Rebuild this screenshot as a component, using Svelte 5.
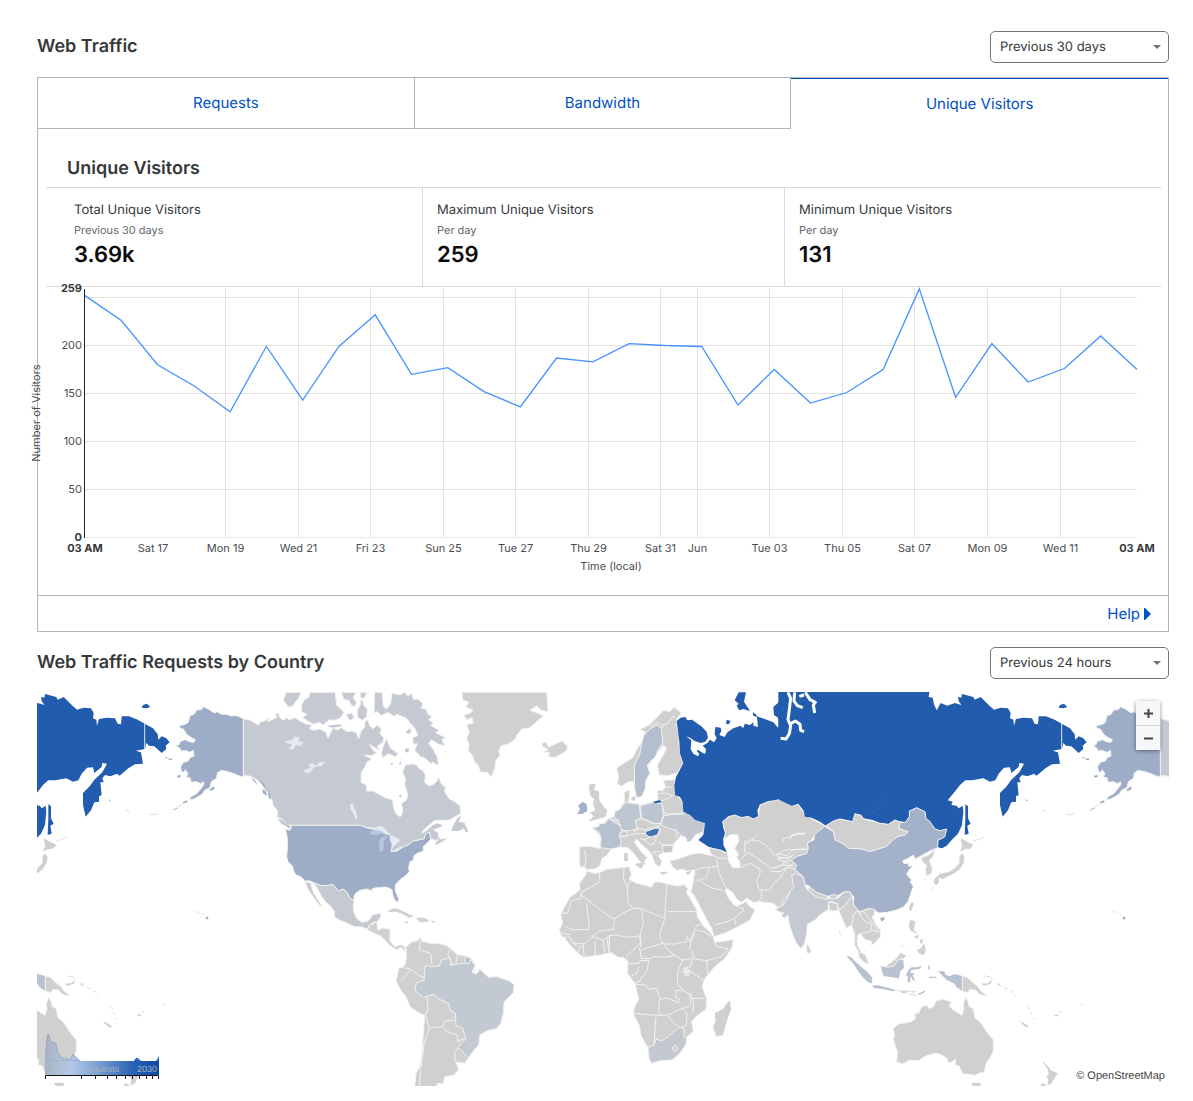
<script>
  const visitors = [252, 226, 180, 158, 131, 199, 143, 199, 232, 170, 177, 152, 136, 187, 183, 202, 200, 199, 138, 175, 140, 151, 175, 259, 146, 202, 162, 176, 210, 175];
  const yFor = (v) => 537.5 - v * 0.96;
  const line = visitors.map((v, i) => `${(85 + (i * 1052) / 29).toFixed(1)},${yFor(v).toFixed(1)}`).join(' ');
  const yTicks = [50, 100, 150, 200, 250];
  const xTicks = [
    [225.5, 'Mon 19'], [298.5, 'Wed 21'], [370.5, 'Fri 23'], [443.5, 'Sun 25'], [515.5, 'Tue 27'],
    [588.5, 'Thu 29'], [660.5, 'Sat 31'], [697.5, 'Jun'], [769.5, 'Tue 03'], [842.5, 'Thu 05'],
    [914.5, 'Sat 07'], [987.5, 'Mon 09'], [1060.5, 'Wed 11']
  ];

  const stats = [
    { title: 'Total Unique Visitors', note: 'Previous 30 days', value: '3.69k' },
    { title: 'Maximum Unique Visitors', note: 'Per day', value: '259' },
    { title: 'Minimum Unique Visitors', note: 'Per day', value: '131' }
  ];

  let tab = $state('Unique Visitors');
  const tabs = ['Requests', 'Bandwidth', 'Unique Visitors'];

  // Each region has its own origin; points are in thirds of a map unit. [class, outline]
  const regions = [
    { x: 30, y: 685, shapes: [
      ['us', 'M641,101 620,92 604,93 590,88 575,88 560,80 553,84 535,72 520,65 514,74 500,75 492,88 480,92 475,112 466,118 448,122 450,130 460,132 470,148 484,158 496,164 492,172 478,170 466,164 450,170 448,178 438,182 450,190 453,198 468,197 480,202 490,196 492,213 480,218 475,228 460,232 452,245 454,260 462,262 466,254 474,266 468,276 480,278 484,292 500,290 512,296 520,290 522,298 512,312 500,326 482,336 478,344 492,342 516,328 524,316 540,308 544,290 560,280 562,264 574,256 584,258 600,262 612,266 625,272 641,276Z'],
      ['us tiny', 'M458,352 470,346 474,350 460,356Z M538,314 552,304 554,312 542,318Z M440,272 452,270 452,276 444,278Z M406,216 414,219 406,220Z M414,222 426,220 426,225 418,225Z M236,342 242,346 238,350Z M428,374 440,368 444,370 430,376Z M526,698 532,694 536,700 530,704Z'],
      ['speck', 'M358,388 370,389 382,386 M286,374 298,380 M498,680 508,682 M514,684 524,690 M440,368 456,358']
    ]},
    { x: 240, y: 685, shapes: [
      ['ca', 'M10,101 30,105 55,121 60,112 75,107 90,96 82,110 100,102 113,96 104,90 114,84 120,98 132,106 140,98 148,104 165,98 180,108 200,118 214,118 210,132 222,136 240,132 258,142 264,160 270,146 280,128 292,136 304,128 320,140 338,138 350,144 356,162 362,140 374,126 374,112 384,104 388,120 398,132 412,120 424,132 420,148 432,158 430,170 412,184 420,196 404,188 388,178 400,196 410,204 394,212 372,210 396,222 380,232 374,248 364,260 363,292 380,300 380,318 400,318 420,330 440,340 458,344 460,366 466,384 480,396 486,388 488,372 484,356 500,344 503,330 498,312 494,300 496,280 488,262 496,240 515,237 530,240 538,252 548,256 556,270 554,292 566,302 578,300 590,290 596,276 604,296 616,308 614,320 628,342 644,350 660,362 662,386 646,394 630,405 584,406 568,420 550,436 545,445 560,436 578,420 592,414 608,420 600,428 580,434 596,444 594,452 600,462 622,460 612,468 590,480 584,476 596,464 584,466 572,460 568,442 552,462 520,468 508,478 490,486 470,500 454,502 456,488 478,466 456,455 440,440 410,430 380,428 362,421 152,421 140,418 126,402 112,396 112,376 100,362 96,346 88,330 72,312 66,298 50,284 30,273 10,272Z'],
      ['ca', 'M185,60 194,42 206,38 210,22 286,22 290,60 302,72 312,82 300,100 284,106 268,104 250,120 238,112 222,118 206,110 188,98 200,88 184,80Z M130,46 138,22 184,22 176,40 164,54 158,64 145,66Z M304,22 348,22 340,38 350,52 344,66 334,60 326,46 312,44Z M352,74 362,58 360,44 370,50 370,60 382,72 380,96 366,106 352,96Z M318,88 336,84 342,98 330,108Z M360,22 380,22 374,38 362,40Z M404,22 426,22 430,64 440,72 452,56 456,24 480,30 494,22 504,34 514,24 522,44 534,42 548,56 544,70 558,72 564,88 576,96 566,104 580,114 572,122 584,128 596,134 588,144 600,150 618,158 606,164 614,182 596,178 574,164 566,176 582,196 586,206 592,216 596,242 580,232 572,236 556,220 540,214 534,206 524,196 532,176 520,178 518,160 534,150 524,130 510,114 500,100 486,94 470,88 462,94 444,82 424,92 412,80 402,84Z M430,182 440,160 444,172 452,190 474,206 466,216 446,206 428,218 424,204Z'],
      ['ca tiny', 'M494,192 506,188 506,202 496,202Z M498,140 510,130 514,140 504,148Z M450,236 460,232 456,240Z M476,238 484,226 482,240Z M634,438 640,420 652,400 664,392 656,410 674,414 678,426 686,442 676,440 672,430 656,438Z M112,400 128,406 150,422 154,436 138,424 124,416Z M260,122 300,118 306,124 276,128Z M476,332 486,328 482,338Z'],
      ['us', 'M152,421 362,421 378,428 400,432 425,440 450,450 458,475 453,500 470,498 490,486 508,478 520,468 552,462 557,446 568,442 572,463 562,474 550,484 550,498 534,504 522,512 520,526 510,530 506,548 508,560 494,574 478,586 466,600 466,618 476,640 474,652 466,648 458,630 456,614 444,608 432,606 420,608 408,608 396,612 398,618 380,612 360,616 348,624 342,634 342,648 330,640 322,624 310,612 296,618 278,598 262,602 242,602 210,588 194,588 184,576 168,570 160,556 158,544 144,530 140,514 142,492 142,458 136,432 150,436 154,428Z'],
      ['us tiny', 'M34,278 44,284 52,300 44,292Z M56,284 70,294 78,310 70,304Z M66,312 76,318 82,332 70,326Z M84,322 90,326 94,344 86,338Z'],
      ['mx', 'M212,590 242,602 262,602 278,598 296,618 310,612 322,624 330,640 342,648 340,664 342,682 350,700 366,712 384,708 392,700 396,690 424,684 420,700 412,710 400,712 388,720 382,732 364,726 340,724 316,712 296,704 282,694 284,680 272,664 256,650 242,630 230,606 224,598Z M194,590 212,594 218,618 230,640 250,668 240,662 224,642 206,616Z'],
      ['lake', 'M132,172 160,162 164,154 180,158 174,168 190,172 182,184 168,180 160,194 146,192 156,178Z M190,256 212,248 206,238 218,234 226,242 240,230 256,230 246,242 224,246 208,264 194,262Z M330,358 338,354 342,370 350,384 352,406 344,400 340,384 332,374Z M400,432 416,422 432,426 444,444 440,450 424,440Z M448,456 462,454 480,466 470,474 458,486 452,470Z M456,497 484,484 490,486 470,500Z'],
      ['lakeus', 'M386,446 400,434 424,438 440,450 424,446 410,450Z M416,470 426,456 446,452 432,466 430,498 418,500 Z'],
      ['gl', 'M666,22 920,22 924,80 904,76 890,62 870,76 892,84 910,92 888,112 870,128 846,132 832,148 824,164 802,178 784,182 776,198 780,212 768,226 764,250 754,276 742,262 722,262 714,240 704,232 698,212 684,196 688,178 680,160 688,140 680,120 700,114 696,98 680,104 672,90 690,84 700,76 678,66 686,52 668,44Z']
    ]},
    { x: 370, y: 900, shapes: [
      ['gray', 'M-8,90 0,73 10,72 20,64 24,90 40,84 60,88 60,122 74,140 94,134 106,142 104,152 92,142 82,150 64,140 46,122 32,108 12,100Z'],
      ['gray tiny', 'M54,34 72,26 88,30 108,40 128,48 118,52 104,44 82,34Z M140,56 160,54 176,62 152,66Z M104,66 114,66 110,68Z M184,64 192,64 190,67Z'],
      ['gray', 'M108,142 124,126 142,122 152,112 156,124 168,126 180,130 204,130 228,136 244,148 262,164 286,168 302,172 316,196 306,216 330,208 356,232 380,230 404,238 420,244 432,254 430,278 416,292 402,306 400,340 392,370 380,386 352,392 330,404 326,434 306,458 294,476 284,490 258,486 266,510 250,526 224,530 220,552 202,550 200,562 134,562 138,520 150,500 156,460 160,400 164,346 142,336 120,320 108,290 92,270 78,242 86,206 104,196 110,170Z'],
      ['br', 'M166,196 184,200 208,198 214,180 240,174 242,196 262,192 284,190 302,180 316,196 306,216 330,208 356,232 380,230 404,238 420,244 432,254 430,278 416,292 402,306 400,340 392,370 380,386 352,392 330,404 326,434 306,458 296,474 264,442 288,416 276,382 258,378 256,340 240,330 236,310 204,296 192,283 160,292 136,272 138,250 162,240 164,216Z'],
      ['border', 'M150,122 148,150 182,160 186,196 M240,146 234,162 246,194 M262,164 258,190 M88,202 120,206 146,226 164,234 M122,208 108,226 92,244 M166,346 174,330 172,290 M166,346 178,384 162,430 158,470 152,510 148,562 M178,384 218,380 226,362 254,362 M218,380 232,396 262,406 262,424 286,416 M264,442 254,462 256,486'],
      ['fr', 'M286,190 286,168 302,176 296,190Z'],
      ['sea', 'M306,216 318,210 328,212 318,222Z']
    ]},
    { x: 540, y: 685, shapes: [
      ['gray', 'M8,172 20,172 24,186 40,180 66,168 82,182 80,196 66,206 44,218 24,214 30,204 10,200 24,194 6,184Z'],
      ['gray', 'M230,250 246,238 278,218 292,190 306,170 316,140 300,134 330,118 348,100 370,76 390,80 402,66 424,84 412,100 410,120 418,150 416,170 420,205 430,235 410,265 384,272 358,270 352,240 372,206 380,190 370,180 350,206 325,240 325,270 305,335 290,335 280,288 262,292 244,304 232,296 236,276Z'],
      ['se', 'M283,290 284,240 300,206 302,186 312,150 330,132 352,120 364,130 368,174 356,190 346,215 322,240 330,266 318,284 316,310 306,334 290,338 284,312Z'],
      ['border', 'M330,124 352,112 364,120 382,118 400,92 412,110 M364,130 372,120'],
      ['gray', 'M118,486 150,484 180,490 180,452 158,430 186,424 206,400 232,392 240,372 254,350 252,322 270,314 268,334 266,352 300,360 340,350 354,348 352,316 370,316 376,306 370,286 404,284 403,325 428,350 434,378 465,405 495,415 490,440 466,450 452,470 440,470 438,458 424,452 408,468 400,480 396,502 370,502 354,512 366,528 360,546 346,538 334,506 318,490 304,478 290,462 284,472 302,498 322,518 314,526 316,540 300,530 282,506 264,488 240,486 214,492 200,512 186,520 180,542 164,552 140,554 134,546 118,544Z'],
      ['gray tiny', 'M148,300 166,298 160,316 176,320 176,346 190,366 200,376 196,394 176,400 148,408 162,394 152,384 168,376 160,356 164,342 152,332Z M276,338 284,334 284,346 274,344Z M286,538 310,534 304,550Z M254,506 262,506 262,528 254,526Z M360,562 382,564 368,568Z M438,564 454,558 446,568Z'],
      ['fr', 'M156,430 176,424 178,416 194,416 206,400 222,412 246,424 244,440 236,450 244,470 240,486 214,492 180,488 184,460 176,440Z'],
      ['de', 'M222,400 224,380 238,374 246,364 258,352 298,358 302,398 286,408 292,432 262,438 244,434 236,406Z M240,442 262,440 258,454 244,452Z'],
      ['pl', 'M302,362 340,352 366,356 370,390 364,414 344,416 304,398Z'],
      ['ua', 'M372,392 440,382 465,405 495,415 490,440 466,450 452,470 440,470 438,458 424,452 408,436 388,430 362,420Z'],
      ['bg', 'M366,482 400,480 396,502 370,504Z'],
      ['hu', 'M316,440 344,430 360,430 352,450 330,456 318,450Z'],
      ['ie', 'M112,388 120,372 114,362 128,350 140,358 142,378 128,386Z'],
      ['border', 'M354,326 376,324 400,332 M354,346 372,346 400,332 M366,360 374,386 432,388 M284,408 304,400 340,416 364,416 M290,430 316,434 360,422 M240,456 262,452 282,446 316,446 M362,432 356,450 340,462 M356,470 366,480 400,480 M406,432 412,458 M330,456 312,466 300,460 M310,460 330,480 340,478 350,460 M350,512 340,500 362,500 M134,496 138,520 134,544 M374,306 400,306 M206,402 236,410 M280,440 300,430'],
      ['ru', 'M410,108 422,98 436,96 442,106 456,104 470,114 484,124 500,140 504,158 496,170 482,174 464,168 450,158 438,154 454,166 452,192 460,206 474,214 478,206 470,198 474,194 488,204 496,206 498,192 488,182 502,174 510,164 522,172 530,160 524,148 526,126 542,128 544,138 538,150 554,156 562,142 580,130 602,122 610,130 614,116 630,120 640,112 640,122 654,126 652,106 650,94 674,102 700,112 714,128 718,116 714,98 702,90 700,66 716,52 718,24 744,24 744,60 730,100 742,110 756,21 804,21 804,345 720,345 705,347 684,350 660,360 652,376 655,395 640,402 624,394 605,398 585,390 565,395 548,410 550,430 558,444 550,460 550,480 562,504 540,495 505,485 475,465 490,450 495,415 465,405 450,390 430,380 428,350 420,336 405,330 403,300 408,276 430,235 420,205 418,170 413,130Z M596,22 618,22 612,50 630,78 610,72 598,76 590,62 596,56 584,46Z M560,104 572,108 566,118 558,116Z M340,350 360,345 364,352 344,355Z M638,82 648,88 652,96 640,92Z'],
      ['gray', 'M548,410 565,395 585,390 605,398 624,394 640,402 655,395 660,360 684,350 705,347 720,343 730,345 740,355 758,360 775,358 795,390 820,404 855,422 850,440 825,452 805,475 804,500 800,560 790,620 770,680 735,690 720,672 700,655 660,650 640,652 620,640 605,652 590,642 578,622 560,610 556,618 566,640 580,658 590,662 608,656 620,648 625,660 645,675 630,705 600,722 560,742 522,755 515,730 498,700 480,665 464,634 452,620 458,600 465,555 440,558 428,552 412,556 396,544 390,528 420,520 452,508 478,504 516,512 505,488 540,495 562,504 566,530 578,548 600,548 600,532 590,515 596,510 584,490 596,470 594,450 572,448 552,464 556,444Z'],
      ['border', 'M615,505 614,468 626,470 654,450 M614,480 634,464 656,468 676,480 690,492 700,510 716,510 730,495 800,492 M604,520 626,502 650,520 680,540 690,550 M600,548 630,535 660,552 660,566 650,585 656,614 M655,615 690,615 702,594 720,580 736,552 760,536 M656,650 666,636 664,618 M516,510 540,520 560,520 M530,520 536,560 548,590 560,612 M465,556 480,550 532,544 M474,592 500,575 508,548 M484,592 520,610 548,616 M478,582 464,590 M690,550 714,545 730,540 760,542 M714,515 738,520 760,510 M525,720 560,710 584,700 612,675 M584,700 588,720 M585,662 612,672 M735,670 725,650 738,636 764,604 M540,495 560,505 M746,456 730,462 730,472 M716,524 745,535']
    ]},
    { x: 780, y: 685, shapes: [
      ['ru', 'M-5,21 448,21 446,36 458,38 462,58 470,76 482,54 502,62 524,54 544,60 536,48 534,36 544,38 546,27 580,36 584,44 602,36 614,48 630,64 642,74 662,68 684,70 692,84 690,100 700,104 702,122 708,102 730,98 756,100 764,116 774,118 776,94 798,94 824,104 845,116 870,130 884,148 886,164 896,154 910,160 920,172 908,182 910,192 896,204 874,184 858,182 850,174 846,192 818,197 834,202 840,236 816,238 796,250 770,272 762,266 742,274 726,270 718,280 722,292 712,292 716,330 708,334 708,350 694,352 684,376 668,395 660,360 660,324 680,304 694,284 718,262 732,236 718,234 716,246 694,264 690,247 672,248 656,266 646,286 630,290 610,280 576,286 556,286 540,300 526,318 503,346 518,350 514,360 530,362 536,370 548,362 550,380 546,420 534,446 515,465 500,482 486,490 473,487 474,466 492,456 500,432 480,437 465,432 450,410 438,400 435,380 410,368 388,378 388,395 376,412 355,408 345,405 325,418 300,415 278,405 250,400 244,390 225,386 218,410 180,402 160,410 138,422 120,410 95,398 75,395 70,376 55,356 35,362 10,350 -5,343Z M556,358 564,364 564,400 572,416 562,422 566,446 554,450 556,400Z M836,68 840,60 852,56 862,66 850,70 Z'],
      ['dateline', 'M845,116 845,192'],
      ['lakeru', 'M308,336 310,346 296,370 280,386 264,388 288,372 300,354Z'],
      ['gulf', 'M24,22 32,40 28,74 24,104 32,122 28,146 18,162 2,160 M32,116 46,108 60,118 62,136 72,140 M44,22 42,48 52,62 68,68 M58,34 72,30 M76,22 90,44 106,52 100,60 104,84'],
      ['gray', 'M138,422 160,408 180,402 218,410 225,386 244,392 250,402 278,408 300,415 325,418 345,405 362,412 356,430 384,440 376,450 355,454 340,464 320,484 296,492 270,500 246,492 206,490 186,474 165,465 160,440Z'],
      ['cn', 'M85,490 82,474 102,464 104,448 134,424 160,440 165,465 186,474 206,490 246,492 270,500 296,492 320,484 340,464 355,454 376,450 384,440 356,430 362,412 376,412 388,395 388,378 410,368 435,380 438,400 450,410 465,432 480,437 500,432 494,456 474,466 473,488 450,498 424,512 406,522 400,510 384,520 368,528 372,536 384,534 386,544 400,542 386,556 380,568 396,586 390,590 400,604 392,626 384,650 370,666 352,674 322,682 298,684 268,670 240,680 232,680 220,660 222,636 208,620 190,622 172,632 140,634 104,620 86,602 74,598 70,576 45,552 50,540 34,526 50,514 80,506Z'],
      ['in', 'M35,570 50,566 70,576 74,598 80,612 108,634 142,642 150,640 174,640 190,622 208,620 218,634 204,650 190,670 176,672 172,656 150,648 144,660 146,672 120,690 106,704 82,718 80,750 72,780 62,790 50,776 40,754 28,720 24,690 12,700 4,690 12,684 -4,680 -14,672 10,660 22,640 30,620 42,604 38,590Z'],
      ['gray', 'M80,612 92,608 110,622 142,634 142,644 108,636Z M146,650 160,654 172,656 174,676 160,678 148,676Z M147,632 164,628 172,634 168,642 150,641Z M80,782 84,778 94,800 86,806 80,802Z M216,634 222,660 240,682 268,670 286,674 282,690 276,696 290,722 300,734 302,754 286,772 274,782 274,768 256,764 240,746 232,752 232,780 242,800 258,812 266,838 252,832 238,818 234,796 224,782 224,746 214,720 200,730 192,714 184,694 176,676 190,666 204,648Z M424,518 446,510 466,492 460,512 448,528 458,552 452,568 438,572 436,554 440,542 428,530Z'],
      ['gray tiny', 'M544,462 558,470 578,480 570,490 552,492 542,498 548,484Z M546,506 552,516 550,532 540,550 528,560 506,572 488,576 466,580 480,568 508,562 524,552 540,534 540,516Z M464,582 476,582 474,594 468,600 462,590Z M484,574 498,576 486,582Z M396,652 400,656 392,678 388,668Z M392,706 404,710 400,736 410,744 392,736 388,722Z M412,796 424,790 432,778 436,796 432,808 420,806Z M404,754 416,752 410,760Z M420,766 428,764 424,776Z'],
      ['cn tiny', 'M300,700 312,696 314,702 306,710Z'],
      ['border', 'M218,690 234,676 246,700 260,712 272,714 276,736 296,740 M216,720 220,690 M256,744 276,736 M240,746 256,744 M250,680 262,694 280,716 294,738 M-10,520 30,518 40,510 M-10,505 20,512 40,494 80,492 M-20,550 6,540 20,526 34,526 M-30,560 0,560 20,546 44,552 M240,802 250,806'],
      ['cloud', 'M76,446 52,446 34,452 30,462'],
      ['speck', 'M580,468 600,462 612,456 M374,778 364,788 M178,740 182,752 M432,584 438,580 M460,606 456,616 M912,218 926,222']
    ]},
    { x: 540, y: 840, shapes: [
      ['gray', 'M142,92 160,100 176,98 200,88 236,84 268,80 274,104 268,118 286,128 310,134 334,142 344,126 362,126 380,132 412,138 434,134 446,150 438,154 454,182 470,210 472,230 490,258 510,276 520,290 524,306 550,304 580,298 576,322 556,354 520,384 495,415 486,440 500,475 498,508 470,528 455,545 460,575 440,592 438,612 420,640 396,660 360,662 336,670 328,660 326,626 304,590 298,556 280,522 284,500 296,478 286,432 262,400 264,364 250,352 235,352 215,338 180,345 130,352 108,334 90,315 76,296 62,284 58,268 68,250 62,222 80,190 92,170 120,150 118,130 136,106Z'],
      ['za', 'M342,616 348,598 366,602 385,590 400,576 420,562 432,566 432,590 440,596 438,612 420,640 396,660 360,662 336,670 328,660 324,622Z'],
      ['gray', 'M396,624 406,615 414,626 404,636Z'],
      ['gray tiny', 'M526,520 550,508 558,496 568,483 572,508 562,534 548,584 530,588 520,560 528,544Z'],
      ['border', 'M178,98 180,125 150,142 125,156 122,176 94,182 90,200 82,220 62,220 M122,164 215,235 224,236 244,222 280,205 265,190 262,140 250,115 252,85 M262,140 274,120 M140,190 148,268 96,270 75,258 M280,205 300,205 375,235 375,215 380,135 M382,215 470,215 M375,235 358,285 370,312 405,312 440,305 442,290 450,306 460,280 470,256 486,252 M305,208 310,250 300,285 304,310 298,330 M224,236 220,268 182,272 156,290 134,312 96,308 92,292 62,292 M156,290 190,300 212,286 230,285 262,292 298,288 302,308 280,330 258,350 M62,280 92,284 M302,330 340,318 370,310 384,330 404,346 M300,330 304,355 330,356 342,350 372,352 404,346 428,360 456,356 M265,372 298,370 300,362 326,362 322,392 306,412 298,424 285,428 M274,408 290,400 298,380 M286,433 318,435 326,448 350,444 360,478 380,474 416,488 418,476 406,472 408,452 428,452 M428,360 414,392 412,432 430,452 448,462 454,498 M358,478 356,515 365,525 M280,520 350,526 385,525 420,508 450,498 M348,530 342,616 M385,528 400,548 420,564 438,558 442,520 430,510 M456,330 460,356 500,362 545,350 565,326 530,320 524,306 M500,362 503,400 M424,396 450,394 490,420 M454,476 496,474 M464,278 452,310 448,330 M470,270 494,276 516,290 M130,315 132,350 M126,314 112,338 M165,305 166,345 M190,300 194,342 M202,296 206,338 M208,286 208,334 M100,310 116,320 M456,356 452,380 428,386 M452,460 462,490 458,520'],
      ['cloud2', 'M430,388 442,384 452,392 446,408 434,408Z']
    ]},
    { x: 780, y: 860, shapes: [
      ['id', 'M198,287 212,290 230,308 262,336 276,352 277,370 266,368 248,352 232,330 218,308Z M276,376 296,376 318,382 348,390 340,394 310,388 282,384Z M302,318 318,322 342,318 356,298 370,300 372,324 362,332 356,356 338,352 310,348Z M378,344 386,330 394,322 410,322 426,318 420,326 394,330 392,340 404,338 398,346 406,362 398,360 392,348 390,368 382,364 384,352Z M474,334 492,334 498,346 510,348 524,342 547,348 547,393 530,382 522,370 500,360 486,346Z'],
      ['gray', 'M318,318 332,308 350,294 360,278 380,286 370,296 356,298 342,318 322,322Z M547,348 562,352 576,366 592,378 604,394 622,408 600,404 586,390 570,388 562,398 547,393Z M340,505 356,492 392,486 406,476 404,462 416,458 426,440 440,436 448,446 460,440 470,422 490,418 514,426 508,438 520,450 546,466 552,446 550,430 557,412 564,424 568,440 580,446 584,472 602,488 620,515 640,540 640,572 632,590 620,606 612,636 596,640 584,646 566,642 548,642 536,616 526,616 526,596 516,606 506,608 500,594 484,584 468,580 440,586 416,602 390,600 368,612 350,606 352,576 338,534 344,530Z'],
      ['gray tiny', 'M574,670 602,670 598,680 582,680Z M790,606 806,624 814,634 832,640 822,654 814,670 804,674 806,656 800,650 808,642 804,626Z M784,680 786,670 798,676 796,684Z M722,486 734,492 746,500 738,500Z M824,466 832,464 832,468Z M606,372 624,372 634,362 632,370 614,376Z M654,370 660,374 656,376Z'],
      ['id tiny', 'M446,316 450,318 448,330 444,326Z M446,350 468,350 470,353 448,354Z M414,402 436,390 432,398 416,406Z M396,394 404,396 398,398Z M362,394 382,394 380,398 364,398Z'],
      ['speck', 'M350,392 410,394 M384,402 410,406 M612,348 630,350 638,358 M654,370 664,380 M672,382 684,388 M690,392 700,398 M702,404 708,410 M742,440 750,450 M752,456 754,464 M760,474 764,480 M836,456 844,454 M900,432 910,436']
    ]}
  ];
</script>

{#snippet world()}
  {#each regions as r}
    <g transform="translate({r.x} {r.y}) scale(0.33333)">
      {#each r.shapes as [kind, d]}
        <path class={kind} {d} />
      {/each}
    </g>
  {/each}
{/snippet}

{#snippet picker(id, label, option)}
  <div class="picker">
    <select {id} aria-label={label}>
      <option>{option}</option>
    </select>
    <svg class="caret" width="8" height="4" viewBox="0 0 8 4" aria-hidden="true"><path d="M0,0H8L4,4Z" /></svg>
  </div>
{/snippet}

<main>
  <header class="bar first">
    <h2>Web Traffic</h2>
    {@render picker('traffic-range', 'Web traffic period', 'Previous 30 days')}
  </header>

  <section class="panel">
    <div class="tabs" role="tablist">
      {#each tabs as t}
        <button role="tab" aria-selected={tab === t} class:active={tab === t} onclick={() => (tab = t)}>{t}</button>
      {/each}
    </div>

    <div class="body">
      <h3>Unique Visitors</h3>
      <div class="stats">
        {#each stats as s}
          <div class="stat">
            <div class="title">{s.title}</div>
            <div class="note">{s.note}</div>
            <div class="value">{s.value}</div>
          </div>
        {/each}
      </div>
      <svg class="chart" viewBox="38 287 1130 308" role="img" aria-label="Unique visitors per day">
        <g class="grid">
          {#each yTicks as v}
            <path d="M85,{yFor(v)}H1137" />
          {/each}
          {#each xTicks as [x]}
            <path d="M{x},289V537" />
          {/each}
          <path class="base" d="M85,537.5H1137" />
        </g>
        <path class="axis" d="M84.5,289V538" />
        <polyline class="series" points={line} />
        <g class="ylabels">
          <text class="strong" x="82" y="292">259</text>
          <text x="82" y="349">200</text>
          <text x="82" y="397">150</text>
          <text x="82" y="445">100</text>
          <text x="82" y="493">50</text>
          <text class="strong" x="82" y="541">0</text>
        </g>
        <g class="xlabels">
          <text class="strong" x="85" y="552">03 AM</text>
          <text x="153" y="552">Sat 17</text>
          {#each xTicks as [x, label]}
            <text {x} y="552">{label}</text>
          {/each}
          <text class="strong" x="1137" y="552">03 AM</text>
          <text x="611" y="570">Time (local)</text>
          <text transform="translate(40 413) rotate(-90)">Number of Visitors</text>
        </g>
      </svg>
    </div>

    <footer>
      <a href="#help">Help
        <svg width="7" height="12" viewBox="0 0 7 12" aria-hidden="true"><path d="M0,0L1,0 7,6 1,12 0,12Z" /></svg>
      </a>
    </footer>
  </section>

  <header class="bar second">
    <h2>Web Traffic Requests by Country</h2>
    {@render picker('country-range', 'Requests by country period', 'Previous 24 hours')}
  </header>

  <section class="map">
    <svg class="land" viewBox="37 692 1132 394" role="img" aria-label="Requests by country">
      {@render world()}
      <g transform="translate(917 0)">{@render world()}</g>
      <g transform="translate(-917 0)">{@render world()}</g>
    </svg>

    <div class="zoom">
      <button aria-label="Zoom in"><svg width="9" height="9" viewBox="0 0 9 9"><path d="M0,4.5H9M4.5,0V9" /></svg></button>
      <button aria-label="Zoom out"><svg width="9" height="9" viewBox="0 0 9 9"><path d="M0,4.5H9" /></svg></button>
    </div>

    <svg class="legend" width="116" height="56" viewBox="44 1024 116 56" role="img" aria-label="0 to 2030 requests">
      <defs>
        <linearGradient id="scale" gradientUnits="userSpaceOnUse" x1="45" y1="0" x2="159" y2="0">
          <stop offset="0" stop-color="#a9b4c3" />
          <stop offset="0.22" stop-color="#b3c8e8" />
          <stop offset="0.4" stop-color="#8cabd9" />
          <stop offset="0.75" stop-color="#2e65b4" />
          <stop offset="1" stop-color="#0a48a4" />
        </linearGradient>
      </defs>
      <path fill="url(#scale)" stroke="#8d9cb4" stroke-opacity="0.7" d="M45.5,1061 46,1050 47,1038 48,1034 49,1035 51,1042 52,1043 54,1042 56,1044 58,1053 61,1057 64,1059 66,1058 69,1060 71,1059 73,1054 76,1057 80,1061Z" />
      <path fill="#2e65b4" d="M134,1061 135,1059 137,1057.5 139,1059 141,1061Z M156,1061 158,1058 159,1056V1061Z" />
      <path fill="url(#scale)" d="M45,1061H159V1075H45Z" />
      <path class="ticks" d="M45.5,1079V1075.5H158.5V1079M81.5,1075V1079M95.5,1075V1079M107.5,1075V1079M116.5,1075V1079M125.5,1075V1079M132.5,1075V1079M139.5,1075V1079M146.5,1075V1079M152.5,1075V1079" />
      <text x="47" y="1072">0</text>
      <text x="102" y="1072" text-anchor="middle">requests</text>
      <text x="157" y="1072" text-anchor="end">2030</text>
    </svg>

    <a class="credit" href="#openstreetmap">© OpenStreetMap</a>
  </section>
</main>

<style>
  :global(body) { background: #fff; }
  main {
    box-sizing: border-box;
    padding: 31px 24px 15px 37px;
    font-family: Inter, 'Liberation Sans', sans-serif;
    text-rendering: geometricPrecision;
    color: #36393a;
  }
  h2, h3 { margin: 0; font-size: 18px; line-height: 24px; font-weight: 600; color: #36393a; }
  .bar { display: flex; align-items: center; justify-content: space-between; height: 32px; }
  .first { margin-bottom: 14px; }
  .second { margin: 15px 0 13px; }

  .picker { position: relative; width: 179px; }
  select {
    display: block;
    appearance: none;
    box-sizing: border-box;
    width: 100%;
    height: 32px;
    padding: 0 24px 0 9px;
    border: 1px solid #72777b;
    border-radius: 5px;
    background: #fff;
    font: 13px/18px Inter, sans-serif;
    text-rendering: geometricPrecision;
    color: #36393a;
  }
  .caret { position: absolute; right: 8px; top: 14px; pointer-events: none; fill: #72777b; }

  .panel { border: 1px solid #b3b6b8; }
  .tabs { display: grid; grid-template-columns: 1fr 1fr 1fr; }
  .tabs button {
    height: 51px;
    padding: 0;
    border: 0;
    border-right: 1px solid #b3b6b8;
    border-bottom: 1px solid #b3b6b8;
    background: #fff;
    font: 15px/20px Inter, sans-serif;
    text-rendering: geometricPrecision;
    color: #0051c3;
    cursor: pointer;
  }
  .tabs button:last-child { border-right: 0; }
  .tabs .active { border-top: 1px solid #0051c3; border-bottom: 0; }

  .body { padding-top: 28px; }
  h3 { padding: 0 29px 6px; }
  .stats {
    display: grid;
    grid-template-columns: 377px 362px 1fr;
    margin: 0 7px 0 8px;
    border-top: 1px solid #d9d9d9;
    border-bottom: 1px solid #d9d9d9;
  }
  .stat { padding: 13px 14px 15px; border-right: 1px solid #d9d9d9; }
  .stat:first-child { padding-left: 28px; }
  .stat:last-child { border-right: 0; }
  .title { font-size: 13px; line-height: 19px; }
  .note { font-size: 11px; line-height: 20px; color: #62676a; }
  .value { font-size: 22px; line-height: 31px; font-weight: 600; color: #0b0b0c; }

  .chart { display: block; width: 100%; height: auto; overflow: visible; }
  .grid path { stroke: #e2e2e2; fill: none; }
  .grid .base { stroke: #ebebeb; }
  .axis { stroke: #222; }
  .series { fill: none; stroke: #4693ff; stroke-width: 1.3; }
  .chart text { font-size: 11px; fill: #4a4d4f; }
  .chart .strong { font-weight: 700; fill: #36393a; }
  .ylabels text { text-anchor: end; }
  .xlabels text { text-anchor: middle; }

  footer { display: flex; justify-content: flex-end; border-top: 1px solid #b3b6b8; padding: 0 17px; }
  footer a { display: flex; align-items: center; gap: 4px; font-size: 15px; line-height: 35px; color: #0051c3; text-decoration: none; }
  footer svg { fill: #0051c3; }

  .map { position: relative; }
  .land { display: block; width: 100%; height: auto; overflow: hidden; }
  .land path { stroke: #f3f2f0; stroke-width: 1; vector-effect: non-scaling-stroke; stroke-linejoin: round; fill: #d0d0d0; }
  .land .ru { fill: #215cae; stroke: none; }
  .land .us { fill: #9dadc8; }
  .land .ca, .land .mx { fill: #c5c9d2; }
  .land .gl, .land .gray { fill: #d0d0d0; }
  .land .br { fill: #c3c9d2; }
  .land .fr { fill: #b6c1cf; }
  .land .se { fill: #b3bfcf; }
  .land .de { fill: #bec6d1; }
  .land .pl { fill: #bcc4d1; }
  .land .ua, .land .bg, .land .za { fill: #c4c9d1; }
  .land .hu { fill: #4573b5; }
  .land .ie { fill: #a1b0c9; stroke: none; }
  .land .cn { fill: #a3b1c9; }
  .land .in { fill: #c5c9d2; }
  .land .id { fill: #b9c2d0; stroke: none; }
  .land .tiny { stroke: none; }
  .land .gray.tiny { stroke: #d0d0d0; }
  .land .lake { fill: #e4e9f3; stroke: none; }
  .land .lakeus { fill: #b5c6e1; stroke: none; }
  .land .lakeru { fill: #2a62b2; stroke: none; }
  .land .sea { fill: #fff; }
  .land .border { fill: none; }
  .land .dateline { fill: none; stroke: #dfe6f1; }
  .land .gulf { fill: none; stroke: #fff; stroke-width: 3; }
  .land .cloud { fill: none; stroke: #eee; stroke-width: 2; }
  .land .cloud2 { fill: #e8e8e8; stroke: none; }
  .land .speck { fill: none; stroke: #dcdfe3; }

  .zoom { position: absolute; top: 9px; right: 9px; width: 24px; display: flex; flex-direction: column; border-radius: 2px; box-shadow: 0 1px 4px rgba(0, 0, 0, 0.45); }
  .zoom button { display: flex; align-items: center; justify-content: center; height: 24px; padding: 0; border: 0; background: #f6f7f9; cursor: pointer; }
  .zoom button:first-child { height: 25px; border-bottom: 1px solid #d5d7da; }
  .zoom svg { stroke: #444; stroke-width: 2; fill: none; }

  .legend { position: absolute; left: 7px; bottom: 6px; }
  .legend text { font: 9px 'Liberation Sans', sans-serif; fill: #a9b2bf; }
  .ticks { fill: none; stroke: #111; }
  .credit { position: absolute; right: 4px; bottom: 3px; font: 11px/14px 'Liberation Sans', sans-serif; color: #444; text-decoration: none; }
</style>
